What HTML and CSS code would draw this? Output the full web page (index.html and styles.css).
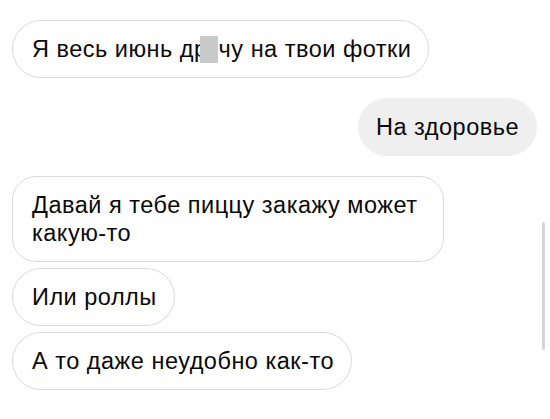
FILE: index.html
```html
<!DOCTYPE html>
<html lang="ru">
<head>
<meta charset="utf-8">
<link rel="stylesheet" href="styles.css">
</head>
<body>
<div class="chat">
  <div class="msg in">Я весь июнь др<span class="redact"></span>чу на твои фотки</div>
  <div class="msg out">На здоровье</div>
  <div class="group">
    <div class="msg in multi">Давай я тебе пиццу закажу может какую-то</div>
    <div class="msg in">Или роллы</div>
    <div class="msg in">А то даже неудобно как-то</div>
  </div>
</div>
<div class="scrollbar"></div>
</body>
</html>
```
FILE: styles.css
```css
html, body {
  margin: 0;
  padding: 0;
  background: #ffffff;
  width: 550px;
  height: 419px;
  overflow: hidden;
}
body {
  font-family: "Liberation Sans", Arial, sans-serif;
  color: #0a0a0a;
  position: relative;
}
.chat {
  display: flex;
  flex-direction: column;
  align-items: flex-start;
  gap: 20px;
  padding: 20px 13px 0 12px;
}
.group {
  display: flex;
  flex-direction: column;
  align-items: flex-start;
  gap: 6px;
}
.msg {
  font-size: 23.5px;
  letter-spacing: 0.5px;
  line-height: 28px;
  padding: 14px 17px 14px 19px;
  border-radius: 29px;
  box-sizing: border-box;
}
.msg.in {
  border: 1px solid #dbdbdb;
  background: #ffffff;
}
.msg.out {
  align-self: flex-end;
  background: #efefef;
  border: 1px solid #efefef;
  padding-left: 17px;
}
.msg.multi {
  width: 432px;
  border-radius: 24px;
}
.redact {
  display: inline-block;
  width: 18px;
  height: 27px;
  background: #c9c9c9;
  vertical-align: -6px;
  margin-left: -8px;
  margin-right: 1px;
}
.scrollbar {
  position: absolute;
  left: 542px;
  top: 222px;
  width: 3px;
  height: 128px;
  border-radius: 2px;
  background: #d6d6d6;
}
```
